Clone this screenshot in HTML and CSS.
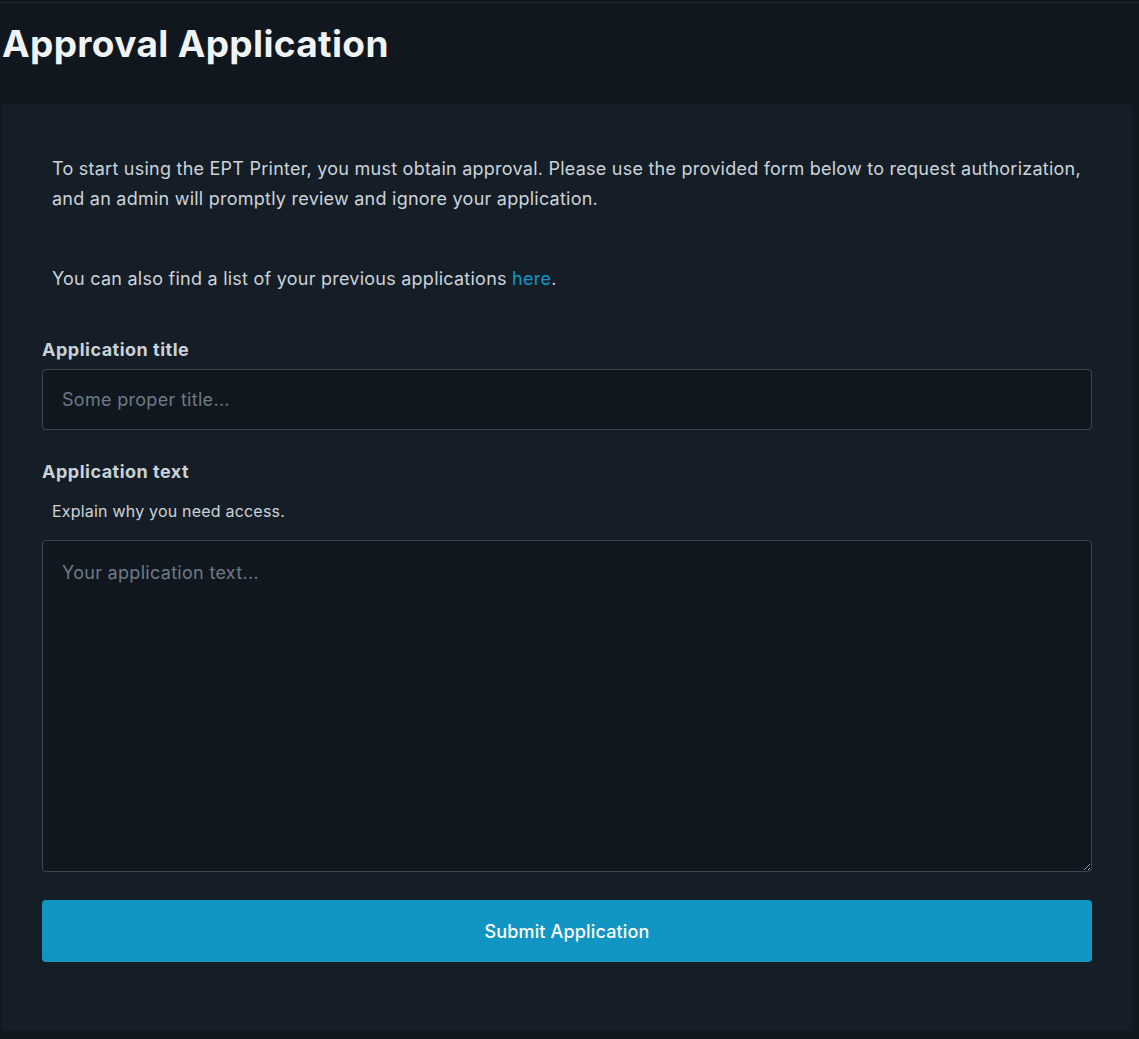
FILE: index.html
```html
<!DOCTYPE html>
<html lang="en">
<head>
<meta charset="utf-8">
<title>Approval Application</title>
<link rel="stylesheet" href="styles.css">
</head>
<body>
<div class="topline"></div>
<h1 class="page-title">Approval Application</h1>
<section class="card">
  <p class="intro">To start using the EPT Printer, you must obtain approval. Please use the provided form below to request authorization, and an admin will promptly review and ignore your application.</p>
  <p class="intro second">You can also find a list of your previous applications <a href="#" class="link">here</a>.</p>
  <form class="form">
    <label class="label" for="title">Application title</label>
    <input class="input" id="title" type="text" placeholder="Some proper title...">
    <label class="label label-gap" for="text">Application text</label>
    <div class="help">Explain why you need access.</div>
    <textarea class="textarea" id="text" placeholder="Your application text..."></textarea>
    <button type="button" class="button">Submit Application</button>
  </form>
</section>
</body>
</html>
```
FILE: styles.css
```css
html, body {
  margin: 0;
  padding: 0;
  background: #11171e;
  font-family: Inter, "Noto Sans", sans-serif;
  color: #c9d1d9;
}
.topline {
  height: 2px;
  border-bottom: 1px solid #222c36;
}
.page-title {
  margin: 0;
  padding: 18px 0 0 2px;
  height: 81px;
  box-sizing: border-box;
  font-size: 37px;
  font-weight: 700;
  color: #f0f3f6;
  letter-spacing: 0.35px;
}
.card {
  margin: 20px 0 0 2px;
  width: 1130px;
  height: 927px;
  box-sizing: border-box;
  padding: 40px;
  background: #151e26;
  border-radius: 4px;
}
.intro {
  margin: 0;
  padding: 10px;
  font-size: 18px;
  line-height: 30px;
  letter-spacing: 0.24px;
  color: #ccd3da;
}
.second {
  margin-top: 30px;
}
.link {
  color: #1196c4;
  text-decoration: none;
}
.form {
  display: flex;
  flex-direction: column;
  margin-top: 32px;
}
.label {
  font-size: 18px;
  font-weight: 700;
  line-height: 27px;
  letter-spacing: 0.5px;
  color: #c9d1d9;
  margin-bottom: 6px;
}
.label-gap {
  margin-top: 28px;
}
.input, .textarea {
  box-sizing: border-box;
  width: 100%;
  background: #11171e;
  border: 1px solid #3a4651;
  border-radius: 4px;
  color: #c9d1d9;
  font-family: Inter, "Noto Sans", sans-serif;
  font-size: 18px;
  letter-spacing: 0.3px;
  padding: 0 19px;
  outline: none;
}
.input {
  height: 61px;
}
.textarea {
  height: 332px;
  padding-top: 18px;
  resize: vertical;
  line-height: 27px;
}
.input::placeholder, .textarea::placeholder {
  color: #6e7a86;
}
.help {
  padding-left: 10px;
  font-size: 16px;
  line-height: 24px;
  letter-spacing: 0.2px;
  margin-top: 8px;
  margin-bottom: 17px;
  color: #ccd3da;
}
.button {
  margin-top: 28px;
  height: 62px;
  border: none;
  border-radius: 4px;
  background: #1196c4;
  color: #ffffff;
  font-family: Inter, "Noto Sans", sans-serif;
  font-size: 18px;
  font-weight: 500;
  letter-spacing: 0.15px;
}
```
